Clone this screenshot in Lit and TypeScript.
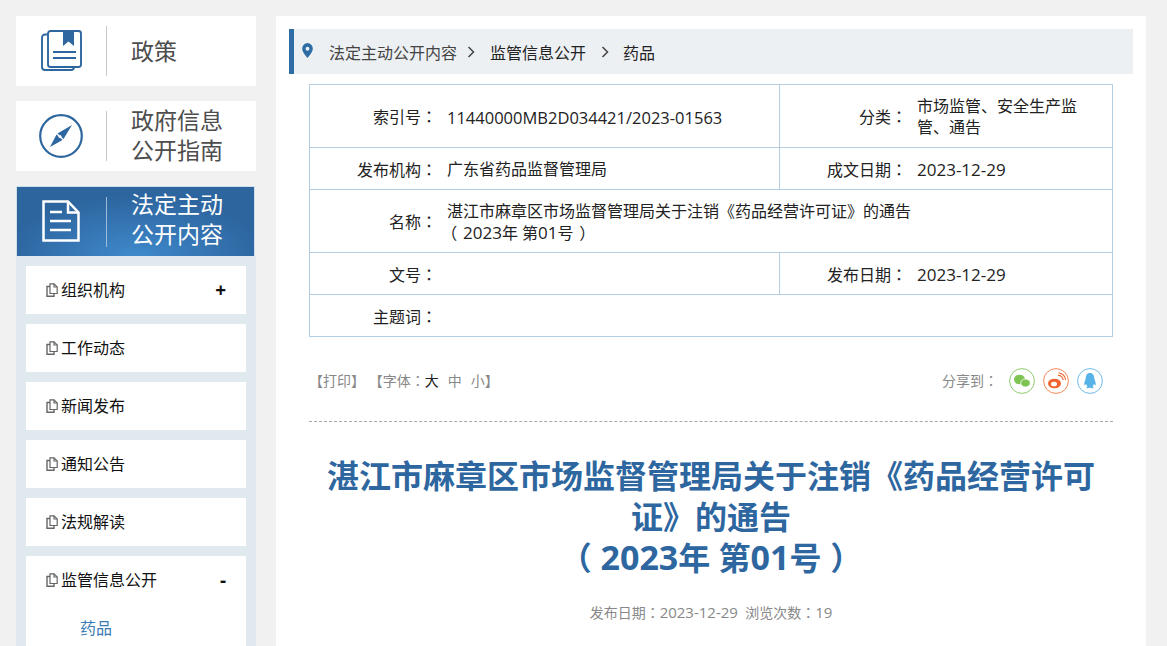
import { LitElement, html, css, svg } from "lit";
import { customElement } from "lit/decorators.js";

const bookIcon = svg`<svg width="41" height="42" viewBox="0 0 41 42" fill="none" stroke="#2e679f" stroke-width="1.900">
  <path d="M6.500 4.500H4A3 3 0 0 0 1 7.500V37A3 3 0 0 0 4 40H30A3 3 0 0 0 33 37"/>
  <rect x="7" y="1" width="33" height="36" rx="2.500"/>
  <path d="M22 1H33V16L27.500 11.500L22 16Z" fill="#2e679f" stroke="none"/>
  <path d="M12 22H35M12 28H35" />
</svg>`;
const compassIcon = svg`<svg width="44" height="44" viewBox="0 0 44 44" fill="none">
  <circle cx="22" cy="22" r="20.800" stroke="#2e679f" stroke-width="2.200"/>
  <path d="M33 11L24.500 25L18.500 19.500Z" fill="#2e679f"/>
  <path d="M11 33L17.500 20.500L23.500 26Z" fill="#2e679f"/>
  <circle cx="21" cy="22.500" r="1.500" fill="#fff"/>
</svg>`;
const docIcon = svg`<svg width="38" height="42" viewBox="0 0 38 42" fill="none" stroke="#fff" stroke-width="2.500">
  <path d="M1.500 1.500H26L36.500 12.500V40.500H1.500Z"/>
  <path d="M26 1.500V12.500H36.500"/>
  <path d="M8 12H20M8 21H29M8 30H29"/>
</svg>`;
const pageIcon = svg`<svg class="pg" width="12" height="14" viewBox="0 0 12 14" fill="none" stroke="#666" stroke-width="1.200">
  <path d="M4 .800H8L11.200 4V10.500H4Z"/>
  <path d="M8 .800V4H11.200"/>
  <path d="M4 3.500H1V13.200H8V10.500" stroke-width="1.400"/>
</svg>`;
const pin = svg`<svg class="pin" width="11" height="15" viewBox="0 0 11 14" preserveAspectRatio="none"><path fill-rule="evenodd" fill="#2e6da4" d="M5.500 0A5.300 5.300 0 0 0 .2 5.300C.2 8.500 5.500 14 5.500 14S10.800 8.500 10.800 5.300A5.300 5.300 0 0 0 5.500 0ZM5.500 3.500A1.900 1.900 0 1 1 5.500 7.300A1.900 1.900 0 0 1 5.500 3.500Z"/></svg>`;
const chev = (cls: string) => svg`<svg class=${cls} width="8" height="12" viewBox="0 0 8 12" fill="none" stroke="#444" stroke-width="1.500"><path d="M1.500 1L6.500 6L1.500 11"/></svg>`;
const colon = html`<span class="col">：</span>`;

@customElement("app-root")
export class AppRoot extends LitElement {
  static styles = css`
    :host { display: flex; gap: 20px; box-sizing: border-box; padding: 16px 0 0 16px; height: 646px; overflow: hidden; background: #f1f1f1; font-family: "Open Sans", "Noto Sans CJK SC", sans-serif; }
    .col { font-family: "Noto Sans CJK TC", sans-serif; }
    .lp { margin-left: -.36em; margin-right: .36em; }
    .rp { margin-left: .36em; margin-right: -.36em; }
    .side { width: 240px; flex: none; display: flex; flex-direction: column; }
    .tab { height: 70px; flex: none; background: #fff; display: flex; align-items: center; margin-bottom: 15px; color: #4d4d4d; font-size: 23px; line-height: 30px; }
    .tab .ic { width: 90px; flex: none; display: flex; justify-content: center; }
    .tab .bar { width: 1px; height: 50px; background: #c8c8c8; flex: none; margin-right: 24px; }
    .tab .two { padding-bottom: 2px; }
    .tab.on { background: radial-gradient(ellipse 130px 60px at 50% 100%, #3f89cb, #2d659f 100%); color: #fff; margin-bottom: 0; width: 239px; box-sizing: border-box; border: 1px solid #cfdfea; border-bottom: none; }
    .tab.on .bar { background: #9fbbd6; }
    .tab.on .ic { width: 89px; box-sizing: border-box; padding: 0 2px 2px 0; }
    .tab.on .two { padding-bottom: 6px; }
    .menu { background: #dfe9ee; padding: 10px 10px 0; display: flex; flex-direction: column; gap: 10px; flex: 1; }
    .item { background: #fff; height: 48px; flex: none; display: flex; align-items: center; padding: 0 20px; font-size: 16px; color: #111; }
    .item .lbl { padding-bottom: 2px; }
    .pg { margin-right: 3px; flex: none; }
    .sign { margin-left: auto; font-weight: 700; font-size: 19px; color: #111; }
    .sub { background: #fff; padding: 0 0 0 54px; font-size: 16px; color: #3a7ab5; height: 70px; margin-top: -10px; line-height: 48px; flex: none; }
    .main { width: 870px; background: #fff; box-sizing: border-box; padding-top: 13px; flex: none; height: 630px; overflow: hidden; }
    .crumb { margin: 0 13px; height: 45px; background: #edf0f3; border-left: 5px solid #2e6da4; display: flex; align-items: center; font-size: 16px; color: #444; padding-left: 8px; }
    .pin { margin-bottom: 2px; }
    .crumb .t1 { margin-left: 16px; }
    .crumb .t2 { margin-left: 15px; color: #222; }
    .crumb .t3 { margin-left: 14px; color: #222; }
    .c1 { margin-left: 10px; }
    .c2 { margin-left: 15px; }
    .body { margin: 10px 33px 0; width: 804px; }
    .meta { display: grid; grid-template-columns: 469px 1fr; border: 1px solid #b5cde0; border-bottom: none; font-size: 16px; color: #222; line-height: 21px; box-sizing: border-box; }
    .row { display: grid; grid-template-columns: subgrid; grid-column: 1 / 3; border-bottom: 1px solid #b5cde0; }
    .cell { display: grid; grid-template-columns: 127px 1fr; align-items: center; min-height: 41px; box-sizing: border-box; padding-top: 2px; }
    .cell + .cell { border-left: 1px solid #b5cde0; }
    .full { grid-column: 1 / 3; }
    .tall { min-height: 62px; }
    .k { text-align: right; }
    .v { padding-left: 10px; }
    .v.pr { padding-right: 24px; }
    .n { font-size: 17px; }
    .n2 { font-size: 16.500px; }
    .tools { display: flex; align-items: center; justify-content: space-between; height: 85px; border-bottom: 1px dashed #a8a8a8; font-size: 14px; color: #888; padding: 4px 10px 0 0; box-sizing: border-box; }
    .tools .lb, .tools .opts { padding-bottom: 2px; }
    .tools b { font-weight: 400; color: #222; }
    .tools .sz { margin-left: 9px; }
    .share { display: flex; align-items: center; gap: 8px; }
    .share span.lb { margin-right: 3px; }
    h1 { margin: 33px 0 0; text-align: center; font-size: 32px; line-height: 41px; font-weight: 700; color: #2e679f; }
    h1 .n { font-size: 34px; }
    h1 .lp { margin-left: -.27em; margin-right: .27em; }
    h1 .rp { margin-left: .27em; margin-right: -.27em; }
    .date { text-align: center; font-size: 14px; color: #888; margin-top: 24px; }
    .date .n { font-size: 15px; }
  `;
  tab(icon: unknown, text: unknown, on = false, two = true) {
    return html`<div class="tab ${on ? "on" : ""}"><div class="ic">${icon}</div><div class="bar"></div><div class="${two ? "two" : ""}">${text}</div></div>`;
  }
  render() {
    const items = ["组织机构", "工作动态", "新闻发布", "通知公告", "法规解读"];
    return html`
      <div class="side">
        ${this.tab(bookIcon, "政策", false, false)}
        ${this.tab(compassIcon, html`政府信息<br />公开指南`)}
        ${this.tab(docIcon, html`法定主动<br />公开内容`, true)}
        <div class="menu">
          ${items.map((t, i) => html`<div class="item">${pageIcon}<span class="lbl">${t}</span>${i === 0 ? html`<span class="sign">+</span>` : ""}</div>`)}
          <div class="item">${pageIcon}<span class="lbl">监管信息公开</span><span class="sign">-</span></div>
          <div class="sub">药品</div>
        </div>
      </div>
      <div class="main">
        <div class="crumb">${pin}<span class="t1">法定主动公开内容</span>${chev("c1")}<span class="t2">监管信息公开</span>${chev("c2")}<span class="t3">药品</span></div>
        <div class="body">
          <div class="meta">
            <div class="row"><div class="cell tall"><div class="k">索引号${colon}</div><div class="v n2">11440000MB2D034421/2023-01563</div></div><div class="cell"><div class="k">分类${colon}</div><div class="v pr">市场监管、安全生产监管、通告</div></div></div>
            <div class="row"><div class="cell"><div class="k">发布机构${colon}</div><div class="v">广东省药品监督管理局</div></div><div class="cell"><div class="k">成文日期${colon}</div><div class="v n">2023-12-29</div></div></div>
            <div class="row"><div class="cell full tall"><div class="k">名称${colon}</div><div class="v">湛江市麻章区市场监督管理局关于注销《药品经营许可证》的通告<br /><span class="lp">（</span><span class="n">2023</span>年 第<span class="n">01</span>号<span class="rp">）</span></div></div></div>
            <div class="row"><div class="cell"><div class="k">文号${colon}</div><div class="v"></div></div><div class="cell"><div class="k">发布日期${colon}</div><div class="v n">2023-12-29</div></div></div>
            <div class="row"><div class="cell full"><div class="k">主题词${colon}</div><div class="v"></div></div></div>
          </div>
          <div class="tools">
            <div class="opts">【打印】 【字体${colon}<b>大</b><span class="sz">中</span><span class="sz">小</span>】</div>
            <div class="share"><span class="lb">分享到${colon}</span>
              <svg width="26" height="26" viewBox="0 0 26 26"><circle cx="13" cy="13" r="12.400" fill="none" stroke="#8fcb6b"/><ellipse cx="10.500" cy="11.500" rx="5.500" ry="4.800" fill="#7dc452"/><ellipse cx="16.500" cy="15" rx="4.800" ry="4" fill="#7dc452" stroke="#fff" stroke-width=".8"/></svg>
              <svg width="26" height="26" viewBox="0 0 26 26"><circle cx="13" cy="13" r="12.400" fill="none" stroke="#f5875a"/><ellipse cx="11.500" cy="15.500" rx="6.500" ry="4.800" fill="#f0662e"/><ellipse cx="11" cy="16" rx="3" ry="2.300" fill="#fff"/><path d="M15 7.500A4.500 4.500 0 0 1 20 12M15.500 5A7 7 0 0 1 22.500 12" fill="none" stroke="#f0662e" stroke-width="1.200"/></svg>
              <svg width="26" height="26" viewBox="0 0 26 26"><circle cx="13" cy="13" r="12.400" fill="none" stroke="#6fbbe8"/><path d="M13 5C9.800 5 8.800 7.800 8.800 10C8.800 11.500 7 14 7.200 16.500C7.400 18 8.500 16.500 9 16C9.300 17 9.800 17.800 10.500 18.400C9.300 18.900 9 20 10.500 20.300C11.500 20.500 12.500 20 13 19.600C13.500 20 14.500 20.500 15.500 20.300C17 20 16.700 18.900 15.500 18.400C16.200 17.800 16.700 17 17 16C17.500 16.500 18.600 18 18.800 16.500C19 14 17.200 11.500 17.200 10C17.200 7.800 16.200 5 13 5Z" fill="#55b3e8"/></svg>
            </div>
          </div>
          <h1>湛江市麻章区市场监督管理局关于注销《药品经营许可证》的通告<br /><span class="lp">（</span><span class="n">2023</span>年 第<span class="n">01</span>号<span class="rp">）</span></h1>
          <div class="date">发布日期${colon}<span class="n">2023-12-29</span>&nbsp; 浏览次数${colon}<span class="n">19</span></div>
        </div>
      </div>`;
  }
}
